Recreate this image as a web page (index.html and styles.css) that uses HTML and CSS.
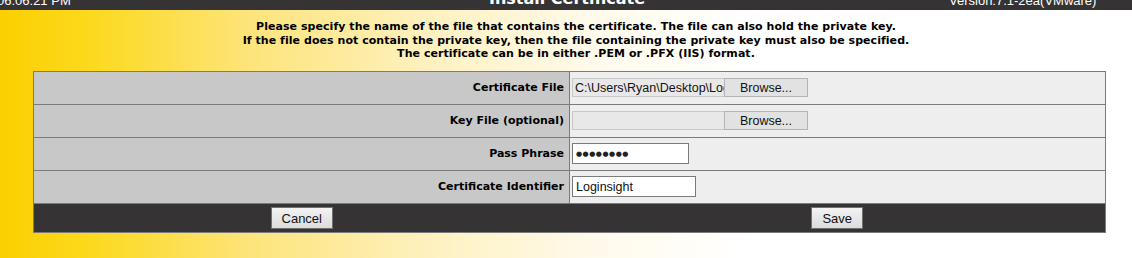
FILE: index.html
```html
<!DOCTYPE html>
<html lang="en">
<head>
    <meta charset="UTF-8">
    <title>Install Certificate</title>
    <link rel="stylesheet" href="styles.css">
</head>
<body>
    <div class="topbar">
        <div class="topbar-inner">
            <span class="clock">06:06:21 PM</span>
            <span class="title">Install Certificate</span>
            <span class="version">Version:7.1-2ea(VMware)</span>
        </div>
    </div>

    <p class="intro">
        Please specify the name of the file that contains the certificate. The file can also hold the private key.<br>
        If the file does not contain the private key, then the file containing the private key must also be specified.<br>
        The certificate can be in either .PEM or .PFX (IIS) format.
    </p>

    <table class="form-table">
        <tr>
            <td class="label">Certificate File</td>
            <td class="value">
                <div class="file-field">
                    <input class="file-name" type="text" value="C:\Users\Ryan\Desktop\Loginsight.pem" readonly>
                    <button class="browse">Browse...</button>
                </div>
            </td>
        </tr>
        <tr>
            <td class="label">Key File (optional)</td>
            <td class="value">
                <div class="file-field">
                    <input class="file-name" type="text" value="" readonly>
                    <button class="browse">Browse...</button>
                </div>
            </td>
        </tr>
        <tr>
            <td class="label">Pass Phrase</td>
            <td class="value"><input class="text-input pass" type="text" value="●●●●●●●●"></td>
        </tr>
        <tr>
            <td class="label">Certificate Identifier</td>
            <td class="value"><input class="text-input ident" type="text" value="Loginsight"></td>
        </tr>
        <tr class="footer">
            <td><button class="btn cancel">Cancel</button></td>
            <td><button class="btn save">Save</button></td>
        </tr>
    </table>
</body>
</html>
```

FILE: styles.css
```css
* {
    margin: 0;
    padding: 0;
    box-sizing: border-box;
}

html, body {
    height: 100%;
}

body {
    font-family: 'DejaVu Sans', Verdana, sans-serif;
    color: #000;
    background: linear-gradient(90deg, #fbd000 0%, #fcd91e 8%, #fde47a 22%, #fef1c0 38%, #fffaea 52%, #ffffff 66%);
    overflow: hidden;
}

.topbar {
    height: 10px;
    background-color: #353334;
    color: #fff;
    overflow: hidden;
}

.topbar-inner {
    display: flex;
    align-items: flex-end;
    height: 10px;
    margin-top: -3px;
}

.clock {
    font-family: 'Liberation Sans', Arial, sans-serif;
    font-size: 13px;
    line-height: 13px;
    margin-left: -3px;
    width: 492px;
}

.title {
    font-weight: bold;
    font-size: 16px;
    line-height: 16px;
    width: 458px;
}

.version {
    font-family: 'Liberation Sans', Arial, sans-serif;
    font-size: 13px;
    line-height: 13px;
    margin-left: 2px;
}

.intro {
    margin-top: 10px;
    padding-left: 20px;
    text-align: center;
    font-weight: bold;
    font-size: 11px;
    line-height: 13.5px;
    letter-spacing: 0.05px;
}

.form-table {
    margin: 10px 0 0 33px;
    width: 1073px;
    border-collapse: collapse;
    border: 1px solid #7b7b7b;
}

.form-table td {
    border: 1px solid #7b7b7b;
    height: 33px;
    vertical-align: middle;
}

.form-table .label {
    width: 536px;
    background-color: #c8c8c8;
    text-align: right;
    font-weight: bold;
    font-size: 11px;
    padding-right: 5px;
}

.form-table .value {
    background-color: #eeeeee;
    padding-left: 2px;
}

.file-field {
    display: flex;
    height: 19px;
}

.file-name {
    width: 152px;
    height: 19px;
    border: 1px solid #c8c8c8;
    border-right: none;
    background-color: #e8e8e8;
    font-family: 'Liberation Sans', Arial, sans-serif;
    font-size: 12.5px;
    color: #111;
    padding-left: 2px;
    outline: none;
}

.browse {
    width: 84px;
    height: 19px;
    border: 1px solid #b4b4b4;
    background-color: #e2e2e2;
    font-family: 'Liberation Sans', Arial, sans-serif;
    font-size: 12.5px;
    color: #111;
}

.text-input {
    display: block;
    border: 1px solid #7b7b7b;
    background-color: #fff;
    font-family: 'Liberation Sans', Arial, sans-serif;
    font-size: 12.5px;
    color: #111;
    padding-left: 3px;
    outline: none;
}

.text-input.pass {
    width: 117px;
    height: 21px;
    font-family: 'DejaVu Sans', sans-serif;
    font-size: 7px;
    letter-spacing: 0.5px;
    color: #222;
}

.text-input.ident {
    width: 124px;
    height: 21px;
}

.form-table .footer td {
    height: 29px;
    background-color: #353334;
    border: none;
    text-align: center;
    vertical-align: middle;
    padding-top: 1px;
}

.btn {
    height: 22px;
    border: 1px solid #707070;
    background: linear-gradient(#f3f3f3, #dcdcdc);
    font-family: 'Liberation Sans', Arial, sans-serif;
    font-size: 13px;
    color: #111;
}

.btn.cancel {
    width: 62px;
}

.btn.save {
    width: 52px;
}
```
